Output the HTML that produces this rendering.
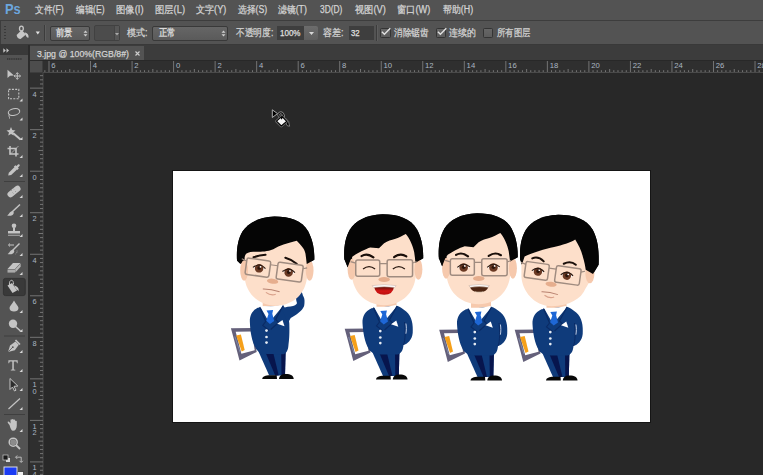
<!DOCTYPE html><html><head><meta charset="utf-8"><style>
*{margin:0;padding:0;box-sizing:border-box}
html,body{width:763px;height:475px;overflow:hidden;background:#282828;font-family:"Liberation Sans",sans-serif}
.a{position:absolute}
.t{position:absolute;white-space:nowrap;transform-origin:0 0;line-height:12px;-webkit-text-stroke:0.25px currentColor}
svg{position:absolute;overflow:visible}
</style></head><body>
<div class="a" style="left:0;top:0;width:763px;height:20px;background:#535353"></div>
<div class="a" style="left:0;top:20px;width:763px;height:1px;background:#3d3d3d"></div>
<div class="a" style="left:0;top:21px;width:763px;height:23px;background:#535353"></div>
<div class="a" style="left:0;top:21px;width:1px;height:23px;background:#3d3d3d"></div>
<div class="a" style="left:0;top:44px;width:763px;height:1px;background:#393939"></div>
<div class="a" style="left:0;top:45px;width:28px;height:10px;background:#393939"></div>
<div class="a" style="left:28px;top:45px;width:735px;height:15px;background:#3c3c3c"></div>
<div class="a" style="left:0;top:55px;width:28px;height:420px;background:#535353"></div>
<div class="a" style="left:28px;top:45px;width:2px;height:430px;background:#2c2c2c"></div>
<div class="a" style="left:30px;top:46px;width:114px;height:14px;background:#535353"></div>
<div class="a" style="left:4px;top:26px;width:2px;height:1px;background:#3a3a3a"></div>
<div class="a" style="left:4px;top:29px;width:2px;height:1px;background:#3a3a3a"></div>
<div class="a" style="left:4px;top:32px;width:2px;height:1px;background:#3a3a3a"></div>
<div class="a" style="left:4px;top:35px;width:2px;height:1px;background:#3a3a3a"></div>
<div class="a" style="left:4px;top:38px;width:2px;height:1px;background:#3a3a3a"></div>
<div class="a" style="left:44px;top:25px;width:1px;height:16px;background:#3c3c3c"></div>
<div class="a" style="left:45px;top:25px;width:1px;height:16px;background:#5e5e5e"></div>
<div class="a" style="left:376px;top:25px;width:1px;height:16px;background:#3c3c3c"></div>
<div class="a" style="left:377px;top:25px;width:1px;height:16px;background:#5e5e5e"></div>
<div class="a" style="left:50px;top:26px;width:40px;height:15px;background:linear-gradient(#666,#5a5a5a);border:1px solid #393939;border-radius:2px"></div>
<div class="a" style="left:152px;top:26px;width:76px;height:15px;background:linear-gradient(#666,#5a5a5a);border:1px solid #393939;border-radius:2px"></div>
<div class="a" style="left:94px;top:25px;width:26px;height:16px;background:#4c4c4c;border:1px solid #414141;border-radius:2px"></div>
<div class="a" style="left:114px;top:26px;width:5px;height:14px;background:#575757;border-left:1px solid #444"></div>
<svg style="left:83px;top:30px" width="5" height="7"><path d="M0.5 2.8L2.5 0.5L4.5 2.8Z M0.5 4.2L2.5 6.5L4.5 4.2Z" fill="#d0d0d0"/></svg>
<svg style="left:221px;top:30px" width="5" height="7"><path d="M0.5 2.8L2.5 0.5L4.5 2.8Z M0.5 4.2L2.5 6.5L4.5 4.2Z" fill="#d0d0d0"/></svg>
<div class="a" style="left:277px;top:26px;width:27px;height:14px;background:#3e3e3e"></div>
<div class="a" style="left:304px;top:26px;width:14px;height:14px;background:linear-gradient(#6c6c6c,#5e5e5e);border-radius:0 2px 2px 0"></div>
<svg style="left:309px;top:32px" width="5" height="3"><path d="M0 0H5L2.5 3Z" fill="#d8d8d8"/></svg>
<svg style="left:115px;top:33px" width="4" height="3"><path d="M0 0H4L2 2.5Z" fill="#aaa"/></svg>
<div class="a" style="left:349px;top:26px;width:25px;height:14px;background:#3e3e3e"></div>
<div class="a" style="left:380.2px;top:28px;width:10.4px;height:10px;background:linear-gradient(#666,#5c5c5c);border:1px solid #343434;border-radius:1.5px"></div>
<svg style="left:380.2px;top:28px" width="12" height="11"><path d="M1.9 3.8L4.4 6.3L10.3 0.3" stroke="#e0e0e0" stroke-width="1.4" fill="none"/></svg>
<div class="a" style="left:435.5px;top:28px;width:10.4px;height:10px;background:linear-gradient(#666,#5c5c5c);border:1px solid #343434;border-radius:1.5px"></div>
<svg style="left:435.5px;top:28px" width="12" height="11"><path d="M1.9 3.8L4.4 6.3L10.3 0.3" stroke="#e0e0e0" stroke-width="1.4" fill="none"/></svg>
<div class="a" style="left:482.8px;top:28px;width:10.4px;height:10px;background:linear-gradient(#666,#5c5c5c);border:1px solid #343434;border-radius:1.5px"></div>
<svg style="left:135px;top:51px" width="6" height="6"><path d="M0.5 0.5L4.5 4.5M4.5 0.5L0.5 4.5" stroke="#cfcfcf" stroke-width="1.1"/></svg>
<svg style="left:3px;top:48px" width="8" height="5"><path d="M0.3 0.3L2.8 2.5L0.3 4.7Z M3.5 0.3L6 2.5L3.5 4.7Z" fill="#c4c4c4"/></svg>
<div class="t" style="left:34.6px;top:4px;font-size:10px;color:#d4d4d4;transform:scaleX(0.876);">文件(F)</div>
<div class="t" style="left:75.5px;top:4px;font-size:10px;color:#d4d4d4;transform:scaleX(0.855);">编辑(E)</div>
<div class="t" style="left:116px;top:4px;font-size:10px;color:#d4d4d4;transform:scaleX(0.937);">图像(I)</div>
<div class="t" style="left:154.6px;top:4px;font-size:10px;color:#d4d4d4;transform:scaleX(0.931);">图层(L)</div>
<div class="t" style="left:195.7px;top:4px;font-size:10px;color:#d4d4d4;transform:scaleX(0.906);">文字(Y)</div>
<div class="t" style="left:237.6px;top:4px;font-size:10px;color:#d4d4d4;transform:scaleX(0.876);">选择(S)</div>
<div class="t" style="left:278.3px;top:4px;font-size:10px;color:#d4d4d4;transform:scaleX(0.882);">滤镜(T)</div>
<div class="t" style="left:320px;top:4px;font-size:10px;color:#d4d4d4;transform:scaleX(0.836);">3D(D)</div>
<div class="t" style="left:354.5px;top:4px;font-size:10px;color:#d4d4d4;transform:scaleX(0.924);">视图(V)</div>
<div class="t" style="left:396.9px;top:4px;font-size:10px;color:#d4d4d4;transform:scaleX(0.925);">窗口(W)</div>
<div class="t" style="left:442.5px;top:4px;font-size:10px;color:#d4d4d4;transform:scaleX(0.888);">帮助(H)</div>
<div class="t" style="left:5.2px;top:0.6px;font-size:14.4px;color:#6ca6de;transform:scaleX(0.897);line-height:16px;font-weight:bold;-webkit-text-stroke:0">Ps</div>
<div class="t" style="left:55.9px;top:27.4px;font-size:10px;color:#e4e4e4;transform:scaleX(0.825);">前景</div>
<div class="t" style="left:127px;top:27.4px;font-size:10px;color:#d4d4d4;transform:scaleX(0.900);">模式:</div>
<div class="t" style="left:159px;top:27.4px;font-size:10px;color:#e4e4e4;transform:scaleX(0.830);">正常</div>
<div class="t" style="left:235.5px;top:27.4px;font-size:10px;color:#d4d4d4;transform:scaleX(0.874);">不透明度:</div>
<div class="t" style="left:280px;top:27px;font-size:9.6px;color:#e0e0e0;transform:scaleX(0.835);">100%</div>
<div class="t" style="left:323.4px;top:27.4px;font-size:10px;color:#d4d4d4;transform:scaleX(0.904);">容差:</div>
<div class="t" style="left:351.4px;top:27px;font-size:9.6px;color:#e0e0e0;transform:scaleX(0.806);">32</div>
<div class="t" style="left:394px;top:27.4px;font-size:10px;color:#d4d4d4;transform:scaleX(0.860);">消除锯齿</div>
<div class="t" style="left:449px;top:27.4px;font-size:10px;color:#d4d4d4;transform:scaleX(0.893);">连续的</div>
<div class="t" style="left:497px;top:27.4px;font-size:10px;color:#d4d4d4;transform:scaleX(0.835);">所有图层</div>
<div class="t" style="left:36.6px;top:48px;font-size:9.5px;color:#d2d2d2;transform:scaleX(0.920);">3.jpg @ 100%(RGB/8#)</div>
<svg style="left:0;top:0" width="763" height="475"><rect x="30" y="60" width="733" height="12.5" fill="#2f2f2f"/><rect x="30" y="60" width="13" height="415" fill="#2f2f2f"/><rect x="30" y="60.5" width="12.5" height="12" fill="#4d4d4d"/><rect x="30" y="60" width="733" height="0.7" fill="#262626"/><rect x="43" y="72" width="720" height="1" fill="#4a4a4a"/><rect x="42.5" y="72.5" width="1" height="403" fill="#4a4a4a"/><path d="M44.86 70.2V72 M49.01 61V72 M53.16 70.2V72 M57.32 70.2V72 M61.47 70.2V72 M65.62 70.2V72 M69.77 69V72 M73.93 70.2V72 M78.08 70.2V72 M82.23 70.2V72 M86.39 70.2V72 M90.54 61V72 M94.69 70.2V72 M98.85 70.2V72 M103.00 70.2V72 M107.15 70.2V72 M111.30 69V72 M115.46 70.2V72 M119.61 70.2V72 M123.76 70.2V72 M127.92 70.2V72 M132.07 61V72 M136.22 70.2V72 M140.38 70.2V72 M144.53 70.2V72 M148.68 70.2V72 M152.83 69V72 M156.99 70.2V72 M161.14 70.2V72 M165.29 70.2V72 M169.45 70.2V72 M173.60 61V72 M177.75 70.2V72 M181.91 70.2V72 M186.06 70.2V72 M190.21 70.2V72 M194.37 69V72 M198.52 70.2V72 M202.67 70.2V72 M206.82 70.2V72 M210.98 70.2V72 M215.13 61V72 M219.28 70.2V72 M223.44 70.2V72 M227.59 70.2V72 M231.74 70.2V72 M235.89 69V72 M240.05 70.2V72 M244.20 70.2V72 M248.35 70.2V72 M252.51 70.2V72 M256.66 61V72 M260.81 70.2V72 M264.97 70.2V72 M269.12 70.2V72 M273.27 70.2V72 M277.42 69V72 M281.58 70.2V72 M285.73 70.2V72 M289.88 70.2V72 M294.04 70.2V72 M298.19 61V72 M302.34 70.2V72 M306.50 70.2V72 M310.65 70.2V72 M314.80 70.2V72 M318.95 69V72 M323.11 70.2V72 M327.26 70.2V72 M331.41 70.2V72 M335.57 70.2V72 M339.72 61V72 M343.87 70.2V72 M348.03 70.2V72 M352.18 70.2V72 M356.33 70.2V72 M360.49 69V72 M364.64 70.2V72 M368.79 70.2V72 M372.94 70.2V72 M377.10 70.2V72 M381.25 61V72 M385.40 70.2V72 M389.56 70.2V72 M393.71 70.2V72 M397.86 70.2V72 M402.01 69V72 M406.17 70.2V72 M410.32 70.2V72 M414.47 70.2V72 M418.63 70.2V72 M422.78 61V72 M426.93 70.2V72 M431.09 70.2V72 M435.24 70.2V72 M439.39 70.2V72 M443.54 69V72 M447.70 70.2V72 M451.85 70.2V72 M456.00 70.2V72 M460.16 70.2V72 M464.31 61V72 M468.46 70.2V72 M472.62 70.2V72 M476.77 70.2V72 M480.92 70.2V72 M485.08 69V72 M489.23 70.2V72 M493.38 70.2V72 M497.53 70.2V72 M501.69 70.2V72 M505.84 61V72 M509.99 70.2V72 M514.15 70.2V72 M518.30 70.2V72 M522.45 70.2V72 M526.61 69V72 M530.76 70.2V72 M534.91 70.2V72 M539.06 70.2V72 M543.22 70.2V72 M547.37 61V72 M551.52 70.2V72 M555.68 70.2V72 M559.83 70.2V72 M563.98 70.2V72 M568.13 69V72 M572.29 70.2V72 M576.44 70.2V72 M580.59 70.2V72 M584.75 70.2V72 M588.90 61V72 M593.05 70.2V72 M597.21 70.2V72 M601.36 70.2V72 M605.51 70.2V72 M609.66 69V72 M613.82 70.2V72 M617.97 70.2V72 M622.12 70.2V72 M626.28 70.2V72 M630.43 61V72 M634.58 70.2V72 M638.74 70.2V72 M642.89 70.2V72 M647.04 70.2V72 M651.20 69V72 M655.35 70.2V72 M659.50 70.2V72 M663.65 70.2V72 M667.81 70.2V72 M671.96 61V72 M676.11 70.2V72 M680.27 70.2V72 M684.42 70.2V72 M688.57 70.2V72 M692.73 69V72 M696.88 70.2V72 M701.03 70.2V72 M705.18 70.2V72 M709.34 70.2V72 M713.49 61V72 M717.64 70.2V72 M721.80 70.2V72 M725.95 70.2V72 M730.10 70.2V72 M734.25 69V72 M738.41 70.2V72 M742.56 70.2V72 M746.71 70.2V72 M750.87 70.2V72 M755.02 61V72 M759.17 70.2V72 M40 75.68H43 M40 79.83H43 M40 83.99H43 M30 88.14H43 M40 92.29H43 M40 96.45H43 M40 100.60H43 M40 104.75H43 M38.5 108.90H43 M40 113.06H43 M40 117.21H43 M40 121.36H43 M40 125.52H43 M30 129.67H43 M40 133.82H43 M40 137.98H43 M40 142.13H43 M40 146.28H43 M38.5 150.44H43 M40 154.59H43 M40 158.74H43 M40 162.89H43 M40 167.05H43 M30 171.20H43 M40 175.35H43 M40 179.51H43 M40 183.66H43 M40 187.81H43 M38.5 191.96H43 M40 196.12H43 M40 200.27H43 M40 204.42H43 M40 208.58H43 M30 212.73H43 M40 216.88H43 M40 221.04H43 M40 225.19H43 M40 229.34H43 M38.5 233.50H43 M40 237.65H43 M40 241.80H43 M40 245.95H43 M40 250.11H43 M30 254.26H43 M40 258.41H43 M40 262.57H43 M40 266.72H43 M40 270.87H43 M38.5 275.02H43 M40 279.18H43 M40 283.33H43 M40 287.48H43 M40 291.64H43 M30 295.79H43 M40 299.94H43 M40 304.10H43 M40 308.25H43 M40 312.40H43 M38.5 316.55H43 M40 320.71H43 M40 324.86H43 M40 329.01H43 M40 333.17H43 M30 337.32H43 M40 341.47H43 M40 345.63H43 M40 349.78H43 M40 353.93H43 M38.5 358.08H43 M40 362.24H43 M40 366.39H43 M40 370.54H43 M40 374.70H43 M30 378.85H43 M40 383.00H43 M40 387.16H43 M40 391.31H43 M40 395.46H43 M38.5 399.62H43 M40 403.77H43 M40 407.92H43 M40 412.07H43 M40 416.23H43 M30 420.38H43 M40 424.53H43 M40 428.69H43 M40 432.84H43 M40 436.99H43 M38.5 441.14H43 M40 445.30H43 M40 449.45H43 M40 453.60H43 M40 457.76H43 M30 461.91H43 M40 466.06H43 M40 470.22H43 M40 474.37H43" stroke="#7c7c7c" stroke-width="0.9" fill="none"/><text x="51.31" y="68.3" font-size="7.4" fill="#aab6c2" font-family="Liberation Sans" textLength="4.3" lengthAdjust="spacingAndGlyphs">6</text><text x="92.84" y="68.3" font-size="7.4" fill="#aab6c2" font-family="Liberation Sans" textLength="4.3" lengthAdjust="spacingAndGlyphs">4</text><text x="134.37" y="68.3" font-size="7.4" fill="#aab6c2" font-family="Liberation Sans" textLength="4.3" lengthAdjust="spacingAndGlyphs">2</text><text x="175.90" y="68.3" font-size="7.4" fill="#aab6c2" font-family="Liberation Sans" textLength="4.3" lengthAdjust="spacingAndGlyphs">0</text><text x="217.43" y="68.3" font-size="7.4" fill="#aab6c2" font-family="Liberation Sans" textLength="4.3" lengthAdjust="spacingAndGlyphs">2</text><text x="258.96" y="68.3" font-size="7.4" fill="#aab6c2" font-family="Liberation Sans" textLength="4.3" lengthAdjust="spacingAndGlyphs">4</text><text x="300.49" y="68.3" font-size="7.4" fill="#aab6c2" font-family="Liberation Sans" textLength="4.3" lengthAdjust="spacingAndGlyphs">6</text><text x="342.02" y="68.3" font-size="7.4" fill="#aab6c2" font-family="Liberation Sans" textLength="4.3" lengthAdjust="spacingAndGlyphs">8</text><text x="383.55" y="68.3" font-size="7.4" fill="#aab6c2" font-family="Liberation Sans" textLength="8.6" lengthAdjust="spacingAndGlyphs">10</text><text x="425.08" y="68.3" font-size="7.4" fill="#aab6c2" font-family="Liberation Sans" textLength="8.6" lengthAdjust="spacingAndGlyphs">12</text><text x="466.61" y="68.3" font-size="7.4" fill="#aab6c2" font-family="Liberation Sans" textLength="8.6" lengthAdjust="spacingAndGlyphs">14</text><text x="508.14" y="68.3" font-size="7.4" fill="#aab6c2" font-family="Liberation Sans" textLength="8.6" lengthAdjust="spacingAndGlyphs">16</text><text x="549.67" y="68.3" font-size="7.4" fill="#aab6c2" font-family="Liberation Sans" textLength="8.6" lengthAdjust="spacingAndGlyphs">18</text><text x="591.20" y="68.3" font-size="7.4" fill="#aab6c2" font-family="Liberation Sans" textLength="8.6" lengthAdjust="spacingAndGlyphs">20</text><text x="632.73" y="68.3" font-size="7.4" fill="#aab6c2" font-family="Liberation Sans" textLength="8.6" lengthAdjust="spacingAndGlyphs">22</text><text x="674.26" y="68.3" font-size="7.4" fill="#aab6c2" font-family="Liberation Sans" textLength="8.6" lengthAdjust="spacingAndGlyphs">24</text><text x="715.79" y="68.3" font-size="7.4" fill="#aab6c2" font-family="Liberation Sans" textLength="8.6" lengthAdjust="spacingAndGlyphs">26</text><text x="757.32" y="68.3" font-size="7.4" fill="#aab6c2" font-family="Liberation Sans" textLength="8.6" lengthAdjust="spacingAndGlyphs">28</text><text x="32.6" y="96.64" font-size="7.4" fill="#aab6c2" font-family="Liberation Sans">4</text><text x="32.6" y="138.17" font-size="7.4" fill="#aab6c2" font-family="Liberation Sans">2</text><text x="32.6" y="179.70" font-size="7.4" fill="#aab6c2" font-family="Liberation Sans">0</text><text x="32.6" y="221.23" font-size="7.4" fill="#aab6c2" font-family="Liberation Sans">2</text><text x="32.6" y="262.76" font-size="7.4" fill="#aab6c2" font-family="Liberation Sans">4</text><text x="32.6" y="304.29" font-size="7.4" fill="#aab6c2" font-family="Liberation Sans">6</text><text x="32.6" y="345.82" font-size="7.4" fill="#aab6c2" font-family="Liberation Sans">8</text><text x="32.6" y="387.35" font-size="7.4" fill="#aab6c2" font-family="Liberation Sans">1</text><text x="32.6" y="393.55" font-size="7.4" fill="#aab6c2" font-family="Liberation Sans">0</text><text x="32.6" y="428.88" font-size="7.4" fill="#aab6c2" font-family="Liberation Sans">1</text><text x="32.6" y="435.08" font-size="7.4" fill="#aab6c2" font-family="Liberation Sans">2</text><text x="32.6" y="470.41" font-size="7.4" fill="#aab6c2" font-family="Liberation Sans">1</text><text x="32.6" y="476.61" font-size="7.4" fill="#aab6c2" font-family="Liberation Sans">4</text></svg>
<div class="a" style="left:172px;top:170px;width:479px;height:253px;background:#fff;border:1px solid #151515"></div><svg style="left:0;top:0" width="28" height="475"><path d="M7 59H22" stroke="#353535" stroke-width="1.5" stroke-dasharray="1.2 0.6"/><rect x="4" y="181" width="21" height="1" fill="#3f3f3f"/><rect x="4" y="335.5" width="21" height="1" fill="#3f3f3f"/><rect x="4" y="414" width="21" height="1" fill="#3f3f3f"/><path d="M22.5 101.5L22.5 98.5L19.5 101.5Z" fill="#d8d8d8"/><path d="M22.5 120.5L22.5 117.5L19.5 120.5Z" fill="#d8d8d8"/><path d="M22.5 140L22.5 137L19.5 140Z" fill="#d8d8d8"/><path d="M22.5 158L22.5 155L19.5 158Z" fill="#d8d8d8"/><path d="M22.5 177L22.5 174L19.5 177Z" fill="#d8d8d8"/><path d="M22.5 198L22.5 195L19.5 198Z" fill="#d8d8d8"/><path d="M22.5 217L22.5 214L19.5 217Z" fill="#d8d8d8"/><path d="M22.5 237L22.5 234L19.5 237Z" fill="#d8d8d8"/><path d="M22.5 256L22.5 253L19.5 256Z" fill="#d8d8d8"/><path d="M22.5 275L22.5 272L19.5 275Z" fill="#d8d8d8"/><path d="M22.5 294L22.5 291L19.5 294Z" fill="#d8d8d8"/><path d="M22.5 313L22.5 310L19.5 313Z" fill="#d8d8d8"/><path d="M22.5 332L22.5 329L19.5 332Z" fill="#d8d8d8"/><path d="M22.5 353L22.5 350L19.5 353Z" fill="#d8d8d8"/><path d="M22.5 372L22.5 369L19.5 372Z" fill="#d8d8d8"/><path d="M22.5 391L22.5 388L19.5 391Z" fill="#d8d8d8"/><path d="M22.5 410L22.5 407L19.5 410Z" fill="#d8d8d8"/><path d="M22.5 432L22.5 429L19.5 432Z" fill="#d8d8d8"/><path d="M7.5 69.7L7.5 78L10 75.8L14 75.5Z" fill="#c4c4c4"/><path d="M17.3 72.8V79.3M14 76H20.6" stroke="#c4c4c4" stroke-width="1"/><path d="M16 74L17.3 72.6L18.6 74M16 78L17.3 79.4L18.6 78M15.5 74.7L14 76L15.5 77.3M19.1 74.7L20.6 76L19.1 77.3" stroke="#c4c4c4" stroke-width="0.8" fill="none"/><rect x="8.6" y="89.4" width="10.2" height="9.4" fill="none" stroke="#c4c4c4" stroke-width="1.1" stroke-dasharray="2 1.3"/><ellipse cx="14" cy="112" rx="5.8" ry="3.3" transform="rotate(-12 14 112)" fill="none" stroke="#c4c4c4" stroke-width="1.1"/><path d="M9.5 114.5C8 116 10 117 9.5 118.5" stroke="#c4c4c4" stroke-width="1" fill="none"/><path d="M13 133L20.5 139.5" stroke="#c4c4c4" stroke-width="2"/><path d="M11 127L12.3 130L15.5 130.4L13 132.5L13.8 135.6L11 134L8.2 135.6L9 132.5L6.5 130.4L9.7 130Z" fill="#c4c4c4"/><path d="M10 146V154H18.5M7.5 148.5H16V156.5" stroke="#c4c4c4" stroke-width="1.6" fill="none"/><path d="M18.5 146L10 154.5" stroke="#c4c4c4" stroke-width="0.7"/><path d="M8.2 175.6 L8.8 172.8 L14.6 167 L17 169.4 L11.2 175 Z" fill="#c4c4c4"/><path d="M13.8 166.8 L15.4 165.2 L16.5 166 L18 164.5 C19 163.5 20.4 164.9 19.5 165.9 L18 167.4 L18.8 168.5 L17.2 170.1 Z" fill="#c4c4c4"/><rect x="6.5" y="188.5" width="15" height="6" rx="3" transform="rotate(-38 14 191.5)" fill="#c4c4c4"/><path d="M11 190L12 191M13 188.5L14 189.5M12.5 192.5L13.5 193.5M15 191L16 192" stroke="#8a8a8a" stroke-width="0.7"/><path d="M12 212L20 204.5" stroke="#c4c4c4" stroke-width="1.5"/><path d="M7 215.5C9 215 9.5 211.5 12 211.3C14 211.2 14.5 213.5 12.5 215C11 216 8.5 216 7 215.5Z" fill="#c4c4c4"/><circle cx="14" cy="225.8" r="2.3" fill="#c4c4c4"/><path d="M13 227.5H15V231H13Z" fill="#c4c4c4"/><path d="M8 231H20V233.5H8Z" fill="#c4c4c4"/><path d="M8 234.8H20V235.6H8Z" fill="#c4c4c4"/><path d="M12.5 250.5L19.5 243.5" stroke="#c4c4c4" stroke-width="1.5"/><path d="M7.5 254C9.5 253.5 10 250 12.5 249.8C14.5 249.7 15 252 13 253.5C11.5 254.5 9 254.5 7.5 254Z" fill="#c4c4c4"/><path d="M9 245H14" stroke="#c4c4c4" stroke-width="1"/><path d="M10 243.5L8.3 245L10 246.5" stroke="#c4c4c4" stroke-width="0.9" fill="none"/><path d="M17 250.5C17.5 252 16.5 253.5 15.5 254" stroke="#c4c4c4" stroke-width="0.6" stroke-dasharray="1 0.6" fill="none"/><path d="M7.5 269L13 263H20.5L15 269Z" fill="#c4c4c4"/><path d="M7.5 269.5H15L15 272.6H7.5Z" fill="#a9a9a9"/><path d="M15.3 269.3L20.6 263.5V266.8L15.3 272.6Z" fill="#b6b6b6"/><rect x="3.4" y="278.4" width="21.9" height="17.2" rx="2" fill="#393939" stroke="#2f2f2f" stroke-width="0.8"/><path d="M7.5 285.5L12 283L17 290.5L12.5 293Z" fill="#c4c4c4"/><path d="M9.5 285C9 281.5 10.5 280.3 11.5 280.3C12.8 280.3 13.5 281.5 13.5 284.5" stroke="#c4c4c4" stroke-width="1" fill="none"/><path d="M14 285.5C17 286 19.5 288 18.5 291.5C18 290 16.5 289.5 16 289" fill="#c4c4c4"/><path d="M14 300.5C15.5 303.5 18.5 306 18.5 308C18.5 310.5 16.5 311.5 14 311.5C11.5 311.5 9.5 310.5 9.5 308C9.5 306 12.5 303.5 14 300.5Z" fill="#c4c4c4"/><circle cx="13" cy="323.8" r="4.2" fill="#c4c4c4"/><path d="M15.5 326.5L20.5 331" stroke="#c4c4c4" stroke-width="1.6"/><path d="M8 352L10 345.5L15.5 341.5L18.8 344.8L14.8 350.2Z" fill="#c4c4c4"/><path d="M8.2 351.8L12.5 347.5" stroke="#535353" stroke-width="0.8"/><circle cx="12.8" cy="347.2" r="0.9" fill="#535353"/><path d="M15.5 340L20 344.5" stroke="#c4c4c4" stroke-width="1.6"/><path d="M8.4 360.3H17.7V363.2H17L16.4 361.4H13.8V369.4L15.3 369.8V370.5H10.8V369.8L12.3 369.4V361.4H9.7L9.1 363.2H8.4Z" fill="#c4c4c4"/><path d="M10 378.5V389.5L12.5 387L14.5 391L16 390.2L14 386.3L17.8 386Z" fill="#2d2d2d" stroke="#c4c4c4" stroke-width="1"/><path d="M8.5 409L20 398.5" stroke="#c4c4c4" stroke-width="1.2"/><path d="M9.5 425C8 423 7 422 8 421.5C9 421 10 423 10.5 423.5V420C10.5 419 12 419 12 420V422.5V419.5C12 418.7 13.6 418.7 13.6 419.5V422.5V420C13.6 419.2 15.2 419.2 15.2 420V423V421.3C15.2 420.5 16.8 420.5 16.8 421.3V425.5C16.8 428.5 15.5 430.8 13 430.8C11.5 430.8 10.5 428.5 9.5 425Z" fill="#c4c4c4"/><circle cx="13.2" cy="442.2" r="4" fill="none" stroke="#c4c4c4" stroke-width="1.5"/><circle cx="13.2" cy="442.2" r="3" fill="#8c8c8c"/><path d="M16 445L20 449" stroke="#c4c4c4" stroke-width="1.8"/><rect x="5.5" y="457.5" width="5" height="5" fill="#d8d8d8" stroke="#2a2a2a" stroke-width="0.6"/><rect x="3" y="455" width="5" height="5" fill="#1a1a1a" stroke="#c8c8c8" stroke-width="0.7"/><path d="M16 457.2H21.2V462" stroke="#c4c4c4" stroke-width="0.9" fill="none"/><path d="M17.2 455.5L15.5 457.2L17.2 458.9M19.5 460.8L21.2 462.5L22.9 460.8" stroke="#c4c4c4" stroke-width="0.9" fill="none"/><rect x="17.5" y="471.5" width="6" height="6" fill="#f0f0f0" stroke="#3a3a3a" stroke-width="0.8"/><rect x="4" y="467" width="13" height="10" fill="#1c3cf4" stroke="#e8e8e8" stroke-width="0.9"/></svg><svg style="left:0;top:0" width="60" height="45"><path d="M16.6 35 L21.7 30 L26 34.6 L20.6 39 Q17.3 38.8 16.6 35Z" fill="#c8c8c8"/><ellipse cx="21.4" cy="28.6" rx="1.9" ry="2.5" fill="none" stroke="#c8c8c8" stroke-width="1.3"/><path d="M24.6 32.3 Q28.8 33.2 28.6 37.6 Q26.6 38.2 25.8 35.6Z" fill="#c8c8c8"/><path d="M35.7 31.6 H39.9 L37.8 34.4Z" fill="#e2e2e2"/></svg><svg style="left:0;top:0" width="300" height="140"><path d="M272.3 109.8 L272.3 117.5 L277.5 113.6 Z" fill="#000" stroke="#bdbdbd" stroke-width="0.9" stroke-linejoin="round"/><ellipse cx="281.2" cy="115.6" rx="2.2" ry="3" transform="rotate(-25 281.2 115.6)" fill="none" stroke="#8a8a8a" stroke-width="2.6"/><ellipse cx="281.2" cy="115.6" rx="2.2" ry="3" transform="rotate(-25 281.2 115.6)" fill="none" stroke="#000" stroke-width="1"/><path d="M285.6 118.3 Q289.6 120.5 289.6 126.2 Q287 126.6 286.3 124Z" fill="#000" stroke="#8a8a8a" stroke-width="0.9"/><path d="M276.5 121.2 L282 116.4 L286.7 121.3 L281.3 126 Z" fill="none" stroke="#6a6a6a" stroke-width="2.8" stroke-linejoin="round"/><path d="M276.5 121.2 L282 116.4 L286.7 121.3 L281.3 126 Z" fill="#f4f4f4" stroke="#000" stroke-width="1.1" stroke-linejoin="round"/><circle cx="281.6" cy="118.6" r="0.8" fill="#000"/></svg><svg style="left:0;top:0" width="763" height="475"><g transform="translate(269.7,211.5)"><rect x="-7" y="86" width="20" height="9" fill="#f6c9ad"/><path d="M-38.8 116.8 C-36 127 -33 138 -30.2 149 L-13 140.5 L-17 116.5 Z" fill="#64607a"/><path d="M-34 120.3 L-28.3 142.2 L-15 138.8 L-18 120 Z" fill="#fff"/><path d="M-34.8 125 L-29.5 141" stroke="#7d87a8" stroke-width="1"/><path d="M-33.5 124 L-28.8 123 L-25 138.5 L-28 140 Z" fill="#f5a01a"/><path d="M-13 136 L-0.5 164 L15.3 164 L16 136 Z" fill="#0f3b7b"/><path d="M-5 139 L5.5 164 L9 164 L3 139 Z" fill="#07154d"/><path d="M11.5 140 L11.8 164 L15.3 164 L16 136 Z" fill="#07154d"/><path d="M-7.5 167.6 C-7.5 165 -4 163.8 0 163.8 L7 163.8 L7.3 167.6 Z" fill="#080808"/><path d="M9.3 167.6 C9.3 164.5 12 162.6 16 162.6 C21 162.6 24 164.5 24 167.6 Z" fill="#080808"/><path d="M-12 96.2 C-18 99 -20.3 105 -19.8 111 C-19.5 120 -18 130 -13.5 137.5 C-11 141.5 -6 142.8 2 142.5 L14 142.7 C17.5 141 18.5 138 18.8 133 C19.8 126 19.8 118 19.6 112 C19 104 17 98 13.3 93.8 Z" fill="#0f3b7b"/><path d="M12 97.5 C16 95 20 95.5 23.4 94.6 C26.5 93.5 27.5 92 27.2 91.2 C26.3 89 26 85 26.8 82 L29.3 78.2 C31.5 79.5 33 81.5 33.1 83.7 C34.5 86 35 88 34.8 90.4 C34.8 93 34.5 95 33.5 96.3 C32 99 30.5 100 28.9 101.3 C26.5 103.5 24 105 21 106.5 L18 112 L15 104 Z" fill="#0f3b7b"/><path d="M-10.5 94.5 L-9 96 L-0.5 111 L13.8 93.8 L12 93 C6 95 -4 95 -10.5 94.5Z" fill="#fff"/><path d="M-3.2 99 L3.4 98.6 L2.6 102.3 L4.5 109.5 L0.2 112.6 L-3.4 109.2 L-1.2 102.5 Z" fill="#1e67d6"/><path d="M-10 95.5 L-4 110 L-7 114 L-0.5 119 M13.5 94 L6 108 L9 111 L1 118" stroke="#0a2a64" stroke-width="1.1" fill="none"/><path d="M7.5 112.3 L14.8 114.8 L12.8 108.5 Z" fill="#fff"/><circle cx="-3.2" cy="119.1" r="1.35" fill="#e6ecf4"/><circle cx="-3.2" cy="125.5" r="1.35" fill="#e6ecf4"/><circle cx="-3.2" cy="131.1" r="1.35" fill="#e6ecf4"/></g><g transform="translate(275.5,216.6) rotate(0) scale(0.98)"><path d="M-36 48 L-39.3 45 C-39.8 35 -39 24 -33.5 15 C-28 7 -18 0.5 -1 0 C14 0 27 4 33.3 15 C37.5 23 39.8 32 39.6 44 L32 48.4 Z" fill="#050505"/><path d="M-31.5 15 L-31.5 62 C-30.5 76 -20 90.5 0.5 91 C20 90.5 30.5 77 32 63 L32 15 Z" fill="#fddfca"/><ellipse cx="-32" cy="55" rx="4" ry="10.5" fill="#f6c9ad"/><ellipse cx="34.8" cy="55" rx="4" ry="10.5" fill="#f6c9ad"/><path d="M-39.3 44 L-36 48 L-30 38 C-24 33 -12 39 0 32 C8 28 13.5 27.0 21.7 24.7 C25.5 29.0 29.5 32 30.6 38 L32 48.4 L39.6 44 C39.8 32 37.5 23 33.3 15 C27 4 14 0 -1 0 C-18 0.5 -28 7 -33.5 15 C-39 24 -39.8 35 -39.3 44 Z" fill="#050505"/></g><g transform="translate(273.8,269.9) rotate(7.9) scale(1.0) translate(-0.25,-54.15)"><path d="M-21.5 44.5 Q-16 41.5 -10 40.3 M10 40.5 Q16.5 41.3 22 45" stroke="#1a0f0a" stroke-width="2.1" fill="none" stroke-linecap="round"/><path d="M-20.5 54.5 Q-14.5 48.5 -8.5 54.5 Q-14.5 59 -20.5 54.5Z" fill="#fff"/><circle cx="-14.5" cy="54.6" r="4.3" fill="#6a3923"/><circle cx="-14.5" cy="54.3" r="1.8" fill="#2b140a"/><circle cx="-13.3" cy="53" r="0.9" fill="#fff"/><path d="M-20.8 54.5 Q-14.5 48.3 -8.2 54" stroke="#2b1a12" stroke-width="1.1" fill="none"/><path d="M9.3 54.5 Q15.3 48.5 21.3 54.5 Q15.3 59 9.3 54.5Z" fill="#fff"/><circle cx="15.3" cy="54.6" r="4.3" fill="#6a3923"/><circle cx="15.3" cy="54.3" r="1.8" fill="#2b140a"/><circle cx="16.5" cy="53" r="0.9" fill="#fff"/><path d="M9.0 54.5 Q15.3 48.3 21.6 54" stroke="#2b1a12" stroke-width="1.1" fill="none"/><rect x="-27.8" y="45.9" width="24" height="16.4" rx="2" fill="none" stroke="#a08c80" stroke-width="1.5"/><rect x="3.6" y="45.7" width="25.4" height="17" rx="2" fill="none" stroke="#a08c80" stroke-width="1.5"/><path d="M-3.8 49.5 L3.6 49.5 M-27.8 49 L-33 47.5 M29 49 L33 47.5" stroke="#a08c80" stroke-width="1.2"/><ellipse cx="0.6" cy="65.5" rx="5.7" ry="2.5" fill="#e6ae8e"/><path d="M-8 74.5 Q0 73.2 9 75" stroke="#b88270" stroke-width="1" fill="none"/><path d="M-4.5 77.5 Q1 80.5 5.5 78" stroke="#d8a08a" stroke-width="1.1" fill="none"/></g><g transform="translate(383.5,212)"><rect x="-7" y="86" width="20" height="9" fill="#f6c9ad"/><path d="M-38.8 116.8 C-36 127 -33 138 -30.2 149 L-13 140.5 L-17 116.5 Z" fill="#64607a"/><path d="M-34 120.3 L-28.3 142.2 L-15 138.8 L-18 120 Z" fill="#fff"/><path d="M-34.8 125 L-29.5 141" stroke="#7d87a8" stroke-width="1"/><path d="M-33.5 124 L-28.8 123 L-25 138.5 L-28 140 Z" fill="#f5a01a"/><path d="M-13 136 L-0.5 164 L15.3 164 L16 136 Z" fill="#0f3b7b"/><path d="M-5 139 L5.5 164 L9 164 L3 139 Z" fill="#07154d"/><path d="M11.5 140 L11.8 164 L15.3 164 L16 136 Z" fill="#07154d"/><path d="M-7.5 167.6 C-7.5 165 -4 163.8 0 163.8 L7 163.8 L7.3 167.6 Z" fill="#080808"/><path d="M9.3 167.6 C9.3 164.5 12 162.6 16 162.6 C21 162.6 24 164.5 24 167.6 Z" fill="#080808"/><path d="M-12 96.2 C-18 99 -21.3 104 -21 111 C-20.5 120 -19 130 -14.5 137.5 C-12 141.5 -6 142.8 2 142.5 L14 142.5 C18 141.5 19.5 138 20 133 C24 132 28.5 128 29.2 121 C29.8 113 28.5 104 22.7 99.5 C19 96.5 16 94.5 13.3 93.8 Z" fill="#0f3b7b"/><path d="M-10.5 94.5 L-9 96 L-0.5 111 L13.8 93.8 L12 93 C6 95 -4 95 -10.5 94.5Z" fill="#fff"/><path d="M-3.2 99 L3.4 98.6 L2.6 102.3 L4.5 109.5 L0.2 112.6 L-3.4 109.2 L-1.2 102.5 Z" fill="#1e67d6"/><path d="M-10 95.5 L-4 110 L-7 114 L-0.5 119 M13.5 94 L6 108 L9 111 L1 118" stroke="#0a2a64" stroke-width="1.1" fill="none"/><path d="M20 133 C22 128 22 118 21 110" stroke="#0a2a64" stroke-width="1" fill="none"/><path d="M22.4 111.5 C23 115 23 118 22.4 121.7" stroke="#c0cce4" stroke-width="1" fill="none"/><path d="M7.5 112.3 L14.8 114.8 L12.8 108.5 Z" fill="#fff"/><circle cx="-3.2" cy="119.1" r="1.35" fill="#e6ecf4"/><circle cx="-3.2" cy="125.5" r="1.35" fill="#e6ecf4"/><circle cx="-3.2" cy="131.1" r="1.35" fill="#e6ecf4"/></g><g transform="translate(383.6,214.3) rotate(0) scale(1)"><path d="M-36 53 L-39.3 45 C-39.8 35 -39 24 -33.5 15 C-28 7 -18 0.5 -1 0 C14 0 27 4 33.3 15 C37.5 23 39.8 32 39.6 44 L32 48.4 Z" fill="#050505"/><path d="M-31.5 15 L-31.5 62 C-30.5 76 -20 90.5 0.5 91 C20 90.5 30.5 77 32 63 L32 15 Z" fill="#fddfca"/><ellipse cx="-32" cy="55" rx="4" ry="10.5" fill="#f6c9ad"/><ellipse cx="34.8" cy="55" rx="4" ry="10.5" fill="#f6c9ad"/><path d="M-39.3 44 L-36 53 L-32 43 C-28 39.5 -18 34.5 -13.4 33.1 L-4.6 34 L0.5 29 C4 27 8 25.5 11.2 24.8 C15 23.5 19 21.5 22.2 19.7 C26 24 29.5 32 30.6 38 L32 48.4 L39.6 44 C39.8 32 37.5 23 33.3 15 C27 4 14 0 -1 0 C-18 0.5 -28 7 -33.5 15 C-39 24 -39.8 35 -39.3 44 Z" fill="#050505"/></g><g transform="translate(383.8,268.2) rotate(0) scale(1.0) translate(-0.25,-54.15)"><path d="M-22.1 42 Q-16.4 38.6 -10.1 43.4 M10.5 43 Q17 38.5 22.8 42.3" stroke="#1a0f0a" stroke-width="2.1" fill="none" stroke-linecap="round"/><path d="M-20.5 55 Q-14.5 50 -8.5 55" stroke="#2b1a12" stroke-width="1.3" fill="none"/><path d="M9.3 55 Q15.3 50 21.3 55" stroke="#2b1a12" stroke-width="1.3" fill="none"/><rect x="-27.8" y="45.9" width="24" height="16.4" rx="2" fill="none" stroke="#a08c80" stroke-width="1.5"/><rect x="3.6" y="45.7" width="25.4" height="17" rx="2" fill="none" stroke="#a08c80" stroke-width="1.5"/><path d="M-3.8 49.5 L3.6 49.5 M-27.8 49 L-33 47.5 M29 49 L33 47.5" stroke="#a08c80" stroke-width="1.2"/><ellipse cx="0.6" cy="65.5" rx="5.7" ry="2.5" fill="#e6ae8e"/><defs><linearGradient id="mg" x1="0" y1="0" x2="0" y2="1"><stop offset="0" stop-color="#4a1208"/><stop offset="0.55" stop-color="#d41616"/><stop offset="1" stop-color="#b81010"/></linearGradient></defs><path d="M-9.4 72.6 Q0.6 71.6 10.5 72.6 Q9.5 80.6 0.6 80.8 Q-8.3 80.6 -9.4 72.6Z" fill="url(#mg)"/><path d="M-11.4 71.6 Q0.6 69.4 12.6 71.6 L11 73.5 Q0.6 71.9 -9.8 73.5Z" fill="#fbfbfb" stroke="#c9aaa0" stroke-width="0.5"/></g><g transform="translate(478,213)"><rect x="-7" y="86" width="20" height="9" fill="#f6c9ad"/><path d="M-38.8 116.8 C-36 127 -33 138 -30.2 149 L-13 140.5 L-17 116.5 Z" fill="#64607a"/><path d="M-34 120.3 L-28.3 142.2 L-15 138.8 L-18 120 Z" fill="#fff"/><path d="M-34.8 125 L-29.5 141" stroke="#7d87a8" stroke-width="1"/><path d="M-33.5 124 L-28.8 123 L-25 138.5 L-28 140 Z" fill="#f5a01a"/><path d="M-13 136 L-0.5 164 L15.3 164 L16 136 Z" fill="#0f3b7b"/><path d="M-5 139 L5.5 164 L9 164 L3 139 Z" fill="#07154d"/><path d="M11.5 140 L11.8 164 L15.3 164 L16 136 Z" fill="#07154d"/><path d="M-7.5 167.6 C-7.5 165 -4 163.8 0 163.8 L7 163.8 L7.3 167.6 Z" fill="#080808"/><path d="M9.3 167.6 C9.3 164.5 12 162.6 16 162.6 C21 162.6 24 164.5 24 167.6 Z" fill="#080808"/><path d="M-12 96.2 C-18 99 -21.3 104 -21 111 C-20.5 120 -19 130 -14.5 137.5 C-12 141.5 -6 142.8 2 142.5 L14 142.5 C18 141.5 19.5 138 20 133 C24 132 28.5 128 29.2 121 C29.8 113 28.5 104 22.7 99.5 C19 96.5 16 94.5 13.3 93.8 Z" fill="#0f3b7b"/><path d="M-10.5 94.5 L-9 96 L-0.5 111 L13.8 93.8 L12 93 C6 95 -4 95 -10.5 94.5Z" fill="#fff"/><path d="M-3.2 99 L3.4 98.6 L2.6 102.3 L4.5 109.5 L0.2 112.6 L-3.4 109.2 L-1.2 102.5 Z" fill="#1e67d6"/><path d="M-10 95.5 L-4 110 L-7 114 L-0.5 119 M13.5 94 L6 108 L9 111 L1 118" stroke="#0a2a64" stroke-width="1.1" fill="none"/><path d="M20 133 C22 128 22 118 21 110" stroke="#0a2a64" stroke-width="1" fill="none"/><path d="M22.4 111.5 C23 115 23 118 22.4 121.7" stroke="#c0cce4" stroke-width="1" fill="none"/><path d="M7.5 112.3 L14.8 114.8 L12.8 108.5 Z" fill="#fff"/><circle cx="-3.2" cy="119.1" r="1.35" fill="#e6ecf4"/><circle cx="-3.2" cy="125.5" r="1.35" fill="#e6ecf4"/><circle cx="-3.2" cy="131.1" r="1.35" fill="#e6ecf4"/></g><g transform="translate(478.1,213.2) rotate(0) scale(1)"><path d="M-36 53 L-39.3 45 C-39.8 35 -39 24 -33.5 15 C-28 7 -18 0.5 -1 0 C14 0 27 4 33.3 15 C37.5 23 39.8 32 39.6 44 L32 48.4 Z" fill="#050505"/><path d="M-31.5 15 L-31.5 62 C-30.5 76 -20 90.5 0.5 91 C20 90.5 30.5 77 32 63 L32 15 Z" fill="#fddfca"/><ellipse cx="-32" cy="55" rx="4" ry="10.5" fill="#f6c9ad"/><ellipse cx="34.8" cy="55" rx="4" ry="10.5" fill="#f6c9ad"/><path d="M-39.3 44 L-36 53 L-32 43 C-28 39.5 -18 34.5 -13.4 33.1 L-4.6 34 L0.5 29 C4 27 8 25.5 11.2 24.8 C15 23.5 19 21.5 22.2 19.7 C26 24 29.5 32 30.6 38 L32 48.4 L39.6 44 C39.8 32 37.5 23 33.3 15 C27 4 14 0 -1 0 C-18 0.5 -28 7 -33.5 15 C-39 24 -39.8 35 -39.3 44 Z" fill="#050505"/></g><g transform="translate(478.4,267.1) rotate(0) scale(1.0) translate(-0.25,-54.15)"><path d="M-22.1 42 Q-16.4 38.6 -10.1 43.4 M10.5 43 Q17 38.5 22.8 42.3" stroke="#1a0f0a" stroke-width="2.1" fill="none" stroke-linecap="round"/><path d="M-20.5 54.5 Q-14.5 48.5 -8.5 54.5 Q-14.5 59 -20.5 54.5Z" fill="#fff"/><circle cx="-14.5" cy="54.6" r="4.3" fill="#6a3923"/><circle cx="-14.5" cy="54.3" r="1.8" fill="#2b140a"/><circle cx="-13.3" cy="53" r="0.9" fill="#fff"/><path d="M-20.8 54.5 Q-14.5 48.3 -8.2 54" stroke="#2b1a12" stroke-width="1.1" fill="none"/><path d="M9.3 54.5 Q15.3 48.5 21.3 54.5 Q15.3 59 9.3 54.5Z" fill="#fff"/><circle cx="15.3" cy="54.6" r="4.3" fill="#6a3923"/><circle cx="15.3" cy="54.3" r="1.8" fill="#2b140a"/><circle cx="16.5" cy="53" r="0.9" fill="#fff"/><path d="M9.0 54.5 Q15.3 48.3 21.6 54" stroke="#2b1a12" stroke-width="1.1" fill="none"/><rect x="-27.8" y="45.9" width="24" height="16.4" rx="2" fill="none" stroke="#a08c80" stroke-width="1.5"/><rect x="3.6" y="45.7" width="25.4" height="17" rx="2" fill="none" stroke="#a08c80" stroke-width="1.5"/><path d="M-3.8 49.5 L3.6 49.5 M-27.8 49 L-33 47.5 M29 49 L33 47.5" stroke="#a08c80" stroke-width="1.2"/><ellipse cx="0.6" cy="65.5" rx="5.7" ry="2.5" fill="#e6ae8e"/><path d="M-8.4 73.2 Q1 72.2 10.4 73.2 Q9 79.2 1 79.4 Q-7 79.2 -8.4 73.2Z" fill="#4e2612"/><path d="M-3.5 78.2 Q1 79.6 5.5 78.2 L4.6 79.3 Q1 80.2 -2.6 79.3Z" fill="#eadcc8"/><path d="M-9.2 72.6 Q1 70.4 11.2 72.6 L10 74.4 Q1 72.8 -8 74.4Z" fill="#fbfbfb" stroke="#c5aa9a" stroke-width="0.5"/></g><g transform="translate(553.5,213)"><rect x="-7" y="86" width="20" height="9" fill="#f6c9ad"/><path d="M-38.8 116.8 C-36 127 -33 138 -30.2 149 L-13 140.5 L-17 116.5 Z" fill="#64607a"/><path d="M-34 120.3 L-28.3 142.2 L-15 138.8 L-18 120 Z" fill="#fff"/><path d="M-34.8 125 L-29.5 141" stroke="#7d87a8" stroke-width="1"/><path d="M-33.5 124 L-28.8 123 L-25 138.5 L-28 140 Z" fill="#f5a01a"/><path d="M-13 136 L-0.5 164 L15.3 164 L16 136 Z" fill="#0f3b7b"/><path d="M-5 139 L5.5 164 L9 164 L3 139 Z" fill="#07154d"/><path d="M11.5 140 L11.8 164 L15.3 164 L16 136 Z" fill="#07154d"/><path d="M-7.5 167.6 C-7.5 165 -4 163.8 0 163.8 L7 163.8 L7.3 167.6 Z" fill="#080808"/><path d="M9.3 167.6 C9.3 164.5 12 162.6 16 162.6 C21 162.6 24 164.5 24 167.6 Z" fill="#080808"/><path d="M-12 96.2 C-18 99 -21.3 104 -21 111 C-20.5 120 -19 130 -14.5 137.5 C-12 141.5 -6 142.8 2 142.5 L14 142.5 C18 141.5 19.5 138 20 133 C24 132 28.5 128 29.2 121 C29.8 113 28.5 104 22.7 99.5 C19 96.5 16 94.5 13.3 93.8 Z" fill="#0f3b7b"/><path d="M-10.5 94.5 L-9 96 L-0.5 111 L13.8 93.8 L12 93 C6 95 -4 95 -10.5 94.5Z" fill="#fff"/><path d="M-3.2 99 L3.4 98.6 L2.6 102.3 L4.5 109.5 L0.2 112.6 L-3.4 109.2 L-1.2 102.5 Z" fill="#1e67d6"/><path d="M-10 95.5 L-4 110 L-7 114 L-0.5 119 M13.5 94 L6 108 L9 111 L1 118" stroke="#0a2a64" stroke-width="1.1" fill="none"/><path d="M20 133 C22 128 22 118 21 110" stroke="#0a2a64" stroke-width="1" fill="none"/><path d="M22.4 111.5 C23 115 23 118 22.4 121.7" stroke="#c0cce4" stroke-width="1" fill="none"/><path d="M7.5 112.3 L14.8 114.8 L12.8 108.5 Z" fill="#fff"/><circle cx="-3.2" cy="119.1" r="1.35" fill="#e6ecf4"/><circle cx="-3.2" cy="125.5" r="1.35" fill="#e6ecf4"/><circle cx="-3.2" cy="131.1" r="1.35" fill="#e6ecf4"/></g><g transform="translate(559.4,214.7) rotate(0) scale(1)"><path d="M-36 53 L-39.3 45 C-39.8 35 -39 24 -33.5 15 C-28 7 -18 0.5 -1 0 C14 0 27 4 33.3 15 C37.5 23 39.8 32 39.2 50 L33.6 59.2 Z" fill="#050505"/><path d="M-32 15 L-38 38 L-38 62 C-37 76 -26 91 -7.6 91.6 C10 91 22 84 26 74 L32 64 L32 15 Z" fill="#fddfca"/><ellipse cx="30.5" cy="59" rx="4.5" ry="9.5" fill="#f6c9ad"/><path d="M-39.3 44 L-37.5 50 L-34.8 41.8 C-28 38.5 -15 34 -5.3 32.3 C3 30.5 11 28 15.8 24.9 C19 30 22 36 23.3 41.5 C25 47 26 52 26.3 55 L33.6 59.2 L39.2 50 C39.8 32 37.5 23 33.3 15 C27 4 14 0 -1 0 C-18 0.5 -28 7 -33.5 15 C-39 24 -39.8 35 -39.3 44 Z" fill="#050505"/></g><g transform="translate(552.3,273.2) rotate(8) scale(0.98) translate(-0.25,-54.15)"><path d="M-22.1 42 Q-16.4 38.6 -10.1 43.4 M10.5 43 Q17 38.5 22.8 42.3" stroke="#1a0f0a" stroke-width="2.1" fill="none" stroke-linecap="round"/><path d="M-20.5 54.5 Q-14.5 48.5 -8.5 54.5 Q-14.5 59 -20.5 54.5Z" fill="#fff"/><circle cx="-14.5" cy="54.6" r="4.3" fill="#6a3923"/><circle cx="-14.5" cy="54.3" r="1.8" fill="#2b140a"/><circle cx="-13.3" cy="53" r="0.9" fill="#fff"/><path d="M-20.8 54.5 Q-14.5 48.3 -8.2 54" stroke="#2b1a12" stroke-width="1.1" fill="none"/><path d="M9.3 54.5 Q15.3 48.5 21.3 54.5 Q15.3 59 9.3 54.5Z" fill="#fff"/><circle cx="15.3" cy="54.6" r="4.3" fill="#6a3923"/><circle cx="15.3" cy="54.3" r="1.8" fill="#2b140a"/><circle cx="16.5" cy="53" r="0.9" fill="#fff"/><path d="M9.0 54.5 Q15.3 48.3 21.6 54" stroke="#2b1a12" stroke-width="1.1" fill="none"/><rect x="-27.8" y="45.9" width="24" height="16.4" rx="2" fill="none" stroke="#a08c80" stroke-width="1.5"/><rect x="3.6" y="45.7" width="25.4" height="17" rx="2" fill="none" stroke="#a08c80" stroke-width="1.5"/><path d="M-3.8 49.5 L3.6 49.5 M-27.8 49 L-33 47.5 M29 49 L33 47.5" stroke="#a08c80" stroke-width="1.2"/><ellipse cx="0.6" cy="65.5" rx="5.7" ry="2.5" fill="#e6ae8e"/><path d="M-8 74.5 Q0 73.2 9 75" stroke="#b88270" stroke-width="1" fill="none"/><path d="M-4.5 77.5 Q1 80.5 5.5 78" stroke="#d8a08a" stroke-width="1.1" fill="none"/></g></svg>
</body></html>
